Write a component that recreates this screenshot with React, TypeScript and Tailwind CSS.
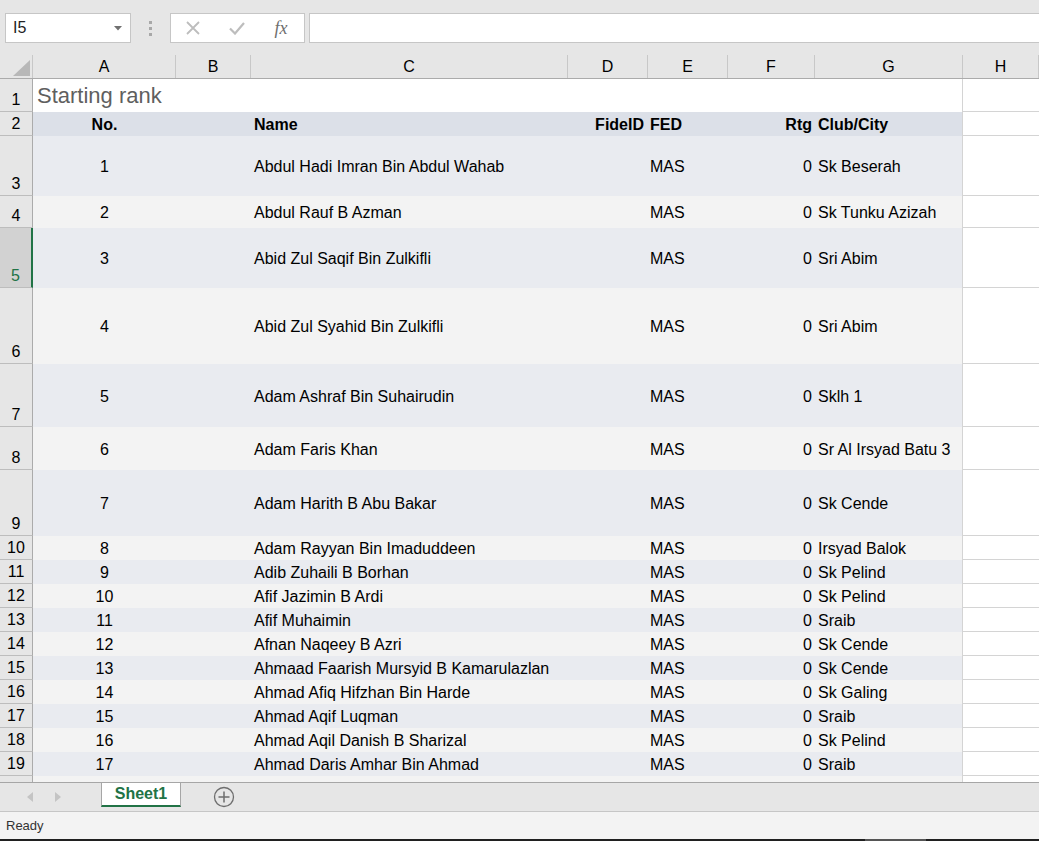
const players = [
  { no: 1, name: "Abdul Hadi Imran Bin Abdul Wahab", club: "Sk Beserah", h: 60 },
  { no: 2, name: "Abdul Rauf B Azman", club: "Sk Tunku Azizah", h: 32 },
  { no: 3, name: "Abid Zul Saqif Bin Zulkifli", club: "Sri Abim", h: 60 },
  { no: 4, name: "Abid Zul Syahid Bin Zulkifli", club: "Sri Abim", h: 76 },
  { no: 5, name: "Adam Ashraf Bin Suhairudin", club: "Sklh 1", h: 63 },
  { no: 6, name: "Adam Faris Khan", club: "Sr Al Irsyad Batu 3", h: 43 },
  { no: 7, name: "Adam Harith B Abu Bakar", club: "Sk Cende", h: 66 },
  { no: 8, name: "Adam Rayyan Bin Imaduddeen", club: "Irsyad Balok", h: 24 },
  { no: 9, name: "Adib Zuhaili B Borhan", club: "Sk Pelind", h: 24 },
  { no: 10, name: "Afif Jazimin B Ardi", club: "Sk Pelind", h: 24 },
  { no: 11, name: "Afif Muhaimin", club: "Sraib", h: 24 },
  { no: 12, name: "Afnan Naqeey B Azri", club: "Sk Cende", h: 24 },
  { no: 13, name: "Ahmaad Faarish Mursyid B Kamarulazlan", club: "Sk Cende", h: 24 },
  { no: 14, name: "Ahmad Afiq Hifzhan Bin Harde", club: "Sk Galing", h: 24 },
  { no: 15, name: "Ahmad Aqif Luqman", club: "Sraib", h: 24 },
  { no: 16, name: "Ahmad Aqil Danish B Sharizal", club: "Sk Pelind", h: 24 },
  { no: 17, name: "Ahmad Daris Amhar Bin Ahmad", club: "Sraib", h: 24 },
];

const columns = ["A", "B", "C", "D", "E", "F", "G", "H"];

const gridCols = "grid grid-cols-[33px_143px_75px_317px_80px_80px_87px_148px_1fr]";

const RowHead = ({ n, selected }: { n: number; selected?: boolean }) => (
  <div
    className={
      selected
        ? "flex items-end justify-center pb-[2px] bg-[#d2d2d2] text-[#217346] border-b border-[#bdbdbd] border-r-2 border-r-[#217346]"
        : "flex items-end justify-center pb-[2px] bg-[#e6e6e6] text-black border-b border-[#bdbdbd] border-r border-r-[#ababab]"
    }
  >
    {n}
  </div>
);

const App = () => {
  return (
    <div className="h-[841px] w-[1039px] flex flex-col overflow-hidden bg-white font-['Liberation_Sans',Arial,sans-serif] text-[16px] leading-[18px]">
      {/* formula bar */}
      <div className="h-[55px] shrink-0 bg-[#e6e6e6] flex items-start pt-[13px] pl-[5px]">
        <div className="w-[126px] h-[30px] bg-white border border-[#c6c6c6] flex items-center justify-between pl-[7px] pr-[8px]">
          <span className="text-[16px] text-[#222]">I5</span>
          <svg width="8" height="5" viewBox="0 0 8 5">
            <path d="M0 0 H8 L4 4.5 Z" fill="#707070" />
          </svg>
        </div>
        <div className="w-[39px] h-[30px] flex flex-col items-center justify-center gap-[3px]">
          <span className="w-[3px] h-[3px] bg-[#a8a8a8]" />
          <span className="w-[3px] h-[3px] bg-[#a8a8a8]" />
          <span className="w-[3px] h-[3px] bg-[#a8a8a8]" />
        </div>
        <div className="w-[135px] h-[30px] bg-white border border-[#c6c6c6] flex items-center">
          <div className="w-[42px] flex justify-center pl-[2px]">
            <svg width="14" height="14" viewBox="0 0 14 14">
              <path d="M1 1 L13 13 M13 1 L1 13" stroke="#bdbdbd" strokeWidth="1.8" />
            </svg>
          </div>
          <div className="w-[48px] flex justify-center">
            <svg width="16" height="13" viewBox="0 0 16 13">
              <path d="M1 6.5 L6 11.5 L15 1" stroke="#bdbdbd" strokeWidth="2.2" fill="none" />
            </svg>
          </div>
          <div className="w-[40px] flex justify-center">
            <span className="font-['Liberation_Serif',serif] italic text-[18px] text-[#6e6e6e]">fx</span>
          </div>
        </div>
        <div className="ml-[4px] flex-1 h-[30px] bg-white border border-r-0 border-[#c6c6c6]" />
      </div>

      {/* column headers */}
      <div className={`${gridCols} h-[24px] shrink-0 bg-[#e6e6e6] border-b border-[#ababab]`}>
        <div className="relative border-r border-[#c8c8c8]">
          <svg className="absolute left-[13px] top-[5px]" width="17" height="16" viewBox="0 0 17 16">
            <path d="M17 0 V16 H0 Z" fill="#b8b8b8" />
          </svg>
        </div>
        {columns.map((c) => (
          <div key={c} className="flex items-center justify-center border-r border-[#c8c8c8] text-black">
            {c}
          </div>
        ))}
      </div>

      {/* sheet */}
      <div className="flex-1 overflow-hidden">
        <div className={`${gridCols} h-[33px]`}>
          <RowHead n={1} />
          <div className="col-span-7 bg-white border-r border-[#d4d4d4] flex items-center pl-[4px] text-[22px] leading-[26px] text-[#5f5f5f] whitespace-nowrap">
            Starting rank
          </div>
          <div className="border-b border-[#d4d4d4]" />
        </div>

        <div className={`${gridCols} h-[24px] text-black`}>
          <RowHead n={2} />
          <div className="bg-[#dce0e8] font-bold flex items-center justify-center pt-[2px]">No.</div>
          <div className="bg-[#dce0e8]" />
          <div className="bg-[#dce0e8] font-bold flex items-center pl-[3px] pt-[2px]">Name</div>
          <div className="bg-[#dce0e8] font-bold flex items-center justify-end pr-[4px] pt-[2px]">FideID</div>
          <div className="bg-[#dce0e8] font-bold flex items-center pl-[2px] pt-[2px]">FED</div>
          <div className="bg-[#dce0e8] font-bold flex items-center justify-end pr-[3px] pt-[2px]">Rtg</div>
          <div className="bg-[#dce0e8] font-bold flex items-center pl-[3px] pt-[2px] border-r border-[#d4d4d4]">Club/City</div>
          <div className="border-b border-[#d4d4d4]" />
        </div>

        {players.map((p, i) => {
          const fill = i % 2 === 0 ? "bg-[#e9ebf0]" : "bg-[#f3f3f3]";
          return (
            <div key={p.no} className={gridCols} style={{ height: p.h }}>
              <RowHead n={p.no + 2} selected={p.no === 3} />
              <div className={`${fill} flex items-center justify-center pt-[2px]`}>{p.no}</div>
              <div className={fill} />
              <div className={`${fill} flex items-center pl-[3px] pt-[2px] whitespace-nowrap`}>{p.name}</div>
              <div className={fill} />
              <div className={`${fill} flex items-center pl-[2px] pt-[2px]`}>MAS</div>
              <div className={`${fill} flex items-center justify-end pr-[3px] pt-[2px]`}>0</div>
              <div className={`${fill} flex items-center pl-[3px] pt-[2px] border-r border-[#d4d4d4] whitespace-nowrap`}>{p.club}</div>
              <div className="border-b border-[#d4d4d4]" />
            </div>
          );
        })}

        <div className={`${gridCols} h-[24px]`}>
          <div className="bg-[#e6e6e6] border-r border-[#ababab]" />
          <div className="col-span-7 bg-[#f3f3f3] border-r border-[#d4d4d4]" />
          <div className="border-b border-[#d4d4d4]" />
        </div>
      </div>

      {/* sheet tabs */}
      <div className="h-[29px] shrink-0 bg-[#e6e6e6] border-t border-[#a6a6a6] flex items-start">
        <div className="w-[101px] h-[28px] flex items-center pl-[27px] gap-[22px]">
          <svg width="6" height="10" viewBox="0 0 6 10">
            <path d="M6 0 V10 L0 5 Z" fill="#c4c4c4" />
          </svg>
          <svg width="6" height="10" viewBox="0 0 6 10">
            <path d="M0 0 V10 L6 5 Z" fill="#c4c4c4" />
          </svg>
        </div>
        <div className="w-[80px] h-[24px] bg-white border-x border-[#a6a6a6] border-b-2 border-b-[#217346] flex items-center justify-center font-bold text-[#217346] text-[16px]">
          Sheet1
        </div>
        <div className="ml-[32px] h-[28px] flex items-center">
          <svg width="22" height="22" viewBox="0 0 22 22">
            <circle cx="11" cy="11" r="9.5" fill="none" stroke="#6e6e6e" strokeWidth="1.3" />
            <path d="M11 5.5 V16.5 M5.5 11 H16.5" stroke="#6e6e6e" strokeWidth="1.5" />
          </svg>
        </div>
      </div>

      {/* status bar */}
      <div className="h-[28px] shrink-0 bg-[#f3f3f3] border-t border-[#c6c6c6] flex items-center pl-[6px] text-[13px] text-[#333]">
        Ready
      </div>
      <div className="h-[2px] shrink-0 bg-[#202020] flex">
        <div className="ml-[865px] w-[61px] bg-[#555]" />
      </div>
    </div>
  );
};

export default App;
